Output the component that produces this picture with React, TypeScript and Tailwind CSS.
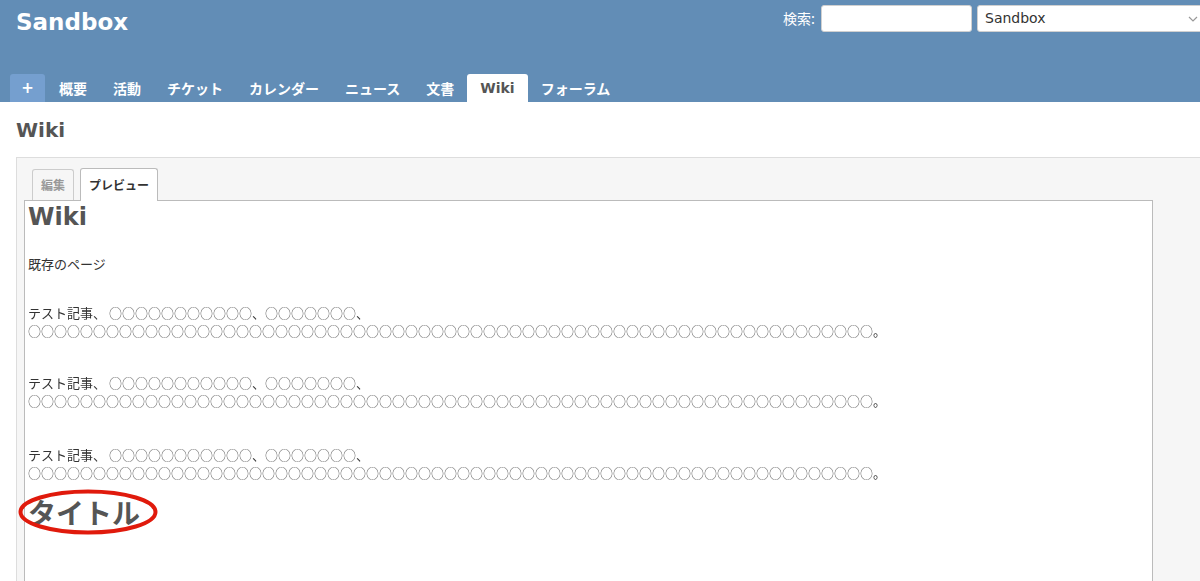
import React from "react";

const LATIN = "font-['DejaVu_Sans','Noto_Sans_CJK_JP',sans-serif]";
const CJK = "font-['Noto_Sans_CJK_JP','DejaVu_Sans',sans-serif]";

const menuItems = ["概要", "活動", "チケット", "カレンダー", "ニュース", "文書", "Wiki", "フォーラム"];

const circles = (n: number) => "○".repeat(n);

function Header() {
  return (
    <div className={`bg-[#628db6] ${LATIN} overflow-hidden`}>
      <div className="flex h-[73px] items-start justify-between">
        <div className="pl-4 pt-[8px] text-[23px] font-bold leading-[28px] text-white">Sandbox</div>
        <div className="mr-[-9px] flex shrink-0 items-center pt-[5px]">
          <span className={`${CJK} mr-[6px] text-[14px] text-white`}>検索:</span>
          <input className="h-[27px] w-[151px] rounded-[3px] border border-[#d0d0d0] bg-white" />
          <div className="relative ml-[5px] flex h-[27px] w-[232px] items-center rounded-[3px] border border-[#d0d0d0] bg-white pl-[7px] text-[14px] text-[#333]">
            Sandbox
            <svg className="absolute right-[10px] top-[9px]" width="10" height="8" viewBox="0 0 10 8" fill="none">
              <polyline points="1,2 5,6 9,2" stroke="#999" strokeWidth="1.2" />
            </svg>
          </div>
        </div>
      </div>
      <div className="flex h-[29px] items-end pl-[10px]">
        <div className="mr-[1px] flex h-[28px] w-[35px] items-center justify-center rounded-t-[3px] bg-[#759fcf] text-[15px] font-bold text-white">
          +
        </div>
        {menuItems.map((item) =>
          item === "Wiki" ? (
            <div
              key={item}
              className="flex h-[28px] items-center rounded-t-[3px] bg-white px-[13px] text-[14px] font-bold text-[#555]"
            >
              {item}
            </div>
          ) : (
            <div
              key={item}
              className={`${CJK} flex h-[28px] items-center px-[13px] text-[14px] font-bold text-white`}
            >
              {item}
            </div>
          )
        )}
      </div>
    </div>
  );
}

function Paragraph({ className }: { className: string }) {
  return (
    <div className={`${CJK} grayscale text-[13px] leading-[18px] text-[#333] ${className}`}>
      <div>
        テスト記事、<span className="ml-[3px] text-[#666]">{circles(11)}</span>、
        <span className="text-[#666]">{circles(7)}</span>、
      </div>
      <div className="whitespace-nowrap">
        <span className="text-[#666]">{circles(65)}</span>。
      </div>
    </div>
  );
}

export default function App() {
  return (
    <div className={`h-[581px] w-[1200px] overflow-hidden bg-white ${LATIN}`}>
      <Header />
      <div className="pl-4">
        <h2 className="mt-[16px] text-[20px] font-bold leading-[24px] text-[#555]">Wiki</h2>
        <div className="mt-[15px] w-[1200px] border-l border-t border-[#ddd] bg-[#f6f6f6] pl-[7px] pt-[9px]">
          <div className="flex items-end pl-[8px]">
            <div className={`${CJK} mr-[6px] flex h-[31px] items-center rounded-t-[3px] border border-b-0 border-[#ccc] bg-[#f6f6f6] px-[8px] text-[12px] font-bold text-[#999]`}>
              編集
            </div>
            <div className={`${CJK} relative top-[1px] flex h-[33px] items-center rounded-t-[3px] border border-b-0 border-[#bbb] bg-white px-[8px] text-[12px] font-bold text-[#333]`}>
              プレビュー
            </div>
          </div>
          <div className="h-[400px] w-[1129px] border border-[#bbb] bg-white pl-[3px]">
            <h1 className="text-[24px] font-bold leading-[32px] text-[#555]">Wiki</h1>
            <div className={`${CJK} mt-[22px] text-[13px] leading-[18px] text-[#333]`}>既存のページ</div>
            <Paragraph className="mt-[31px]" />
            <Paragraph className="mt-[34px]" />
            <Paragraph className="mt-[36px]" />
            <div className="relative mt-[13px] inline-block">
              <div className={`${CJK} text-[28px] font-bold leading-[34px] text-[#555]`}>タイトル</div>
              <svg
                className="absolute left-[-10px] top-[-6px]"
                width="140"
                height="46"
                viewBox="0 0 140 46"
                fill="none"
              >
                <ellipse cx="70" cy="23" rx="67.5" ry="20.5" stroke="#e01a0c" strokeWidth="4" />
              </svg>
            </div>
          </div>
        </div>
      </div>
    </div>
  );
}
